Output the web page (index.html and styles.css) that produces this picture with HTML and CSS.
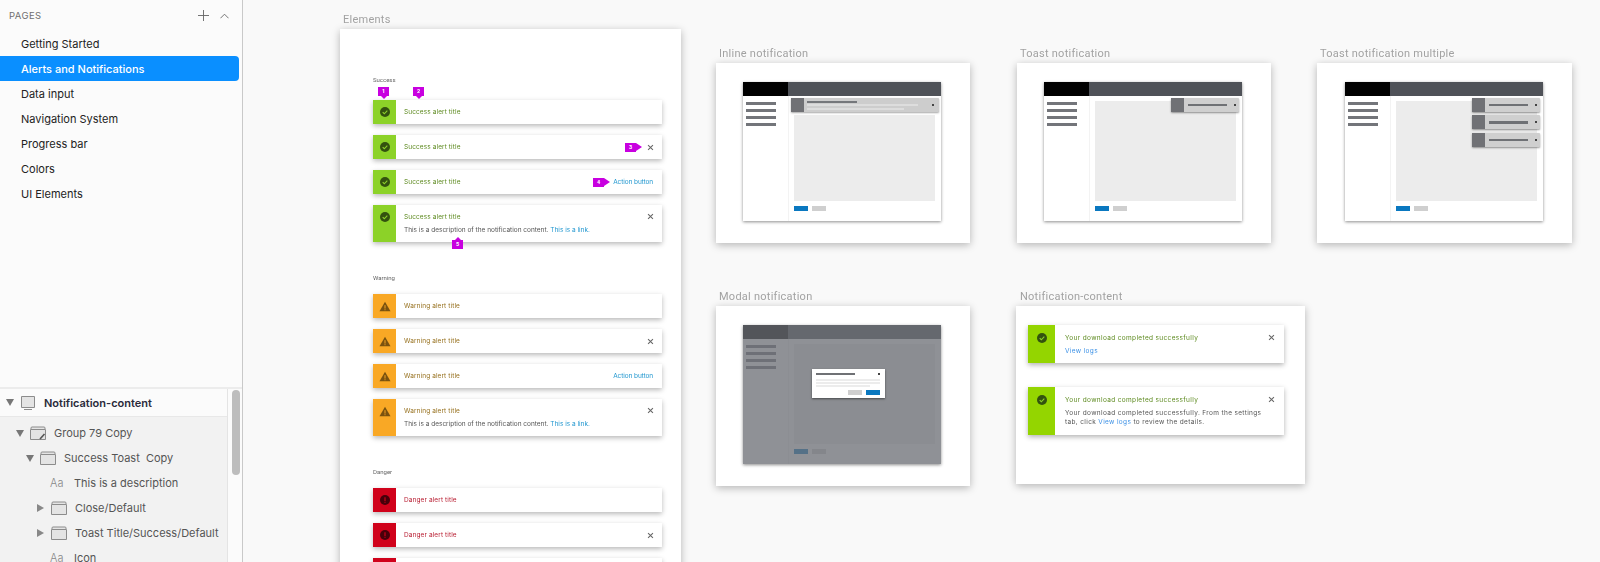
FILE: index.html
```html
<!DOCTYPE html>
<html lang="en">
<head>
    <meta charset="UTF-8">
    <title>Alerts and Notifications</title>
    <link rel="stylesheet" href="styles.css">
</head>
<body>
    <svg class="defs" width="0" height="0">
        <symbol id="i-check" viewBox="0 0 16 16">
            <circle cx="8" cy="8" r="8" fill="currentColor"/>
            <path d="M4.3 8.2l2.6 2.6 4.8-5" fill="none" stroke="#8fd42c" stroke-width="1.7"/>
        </symbol>
        <symbol id="i-warn" viewBox="0 0 16 16">
            <path d="M8 1l8 14H0z" fill="currentColor"/>
            <path d="M8 6v5M8 12v1.4" fill="none" stroke="#f9a825" stroke-width="1.4"/>
        </symbol>
        <symbol id="i-danger" viewBox="0 0 16 16">
            <circle cx="8" cy="8" r="8" fill="currentColor"/>
            <path d="M8 3.5v6M8 10.8v1.6" fill="none" stroke="#d0021b" stroke-width="1.8"/>
        </symbol>
        <symbol id="i-close" viewBox="0 0 10 10">
            <path d="M1.5 1.5l7 7M8.500 1.500l-7 7" fill="none" stroke="currentColor" stroke-width="1.5"/>
        </symbol>
        <symbol id="i-folder" viewBox="0 0 16 14">
            <path d="M1 3V2q0-1 1-1h12q1 0 1 1v1M.5 3.500h15v10H.5z" fill="#e4e4e4" stroke="#8c8c8c"/>
        </symbol>
    </svg>

    <div class="app">
        <aside class="sidebar">
            <section class="pages">
                <div class="pages-head">
                    <span>PAGES</span>
                    <svg class="head-icon plus" viewBox="0 0 12 12"><path d="M6 0v12M0 6h12"/></svg>
                    <svg class="head-icon caret" viewBox="0 0 10 6"><path d="M.5 5.500L5 1l4.500 4.500"/></svg>
                </div>
                <div class="page-item">Getting Started</div>
                <div class="page-item selected">Alerts and Notifications</div>
                <div class="page-item">Data input</div>
                <div class="page-item">Navigation System</div>
                <div class="page-item">Progress bar</div>
                <div class="page-item">Colors</div>
                <div class="page-item">UI Elements</div>
            </section>
            <section class="layers">
                <div class="layer-list">
                    <div class="layer layer-top">
                        <span class="tri down"></span>
                        <svg class="layer-icon" viewBox="0 0 16 14"><path d="M1.500.5h13v11h-13zM4 13.500h8" fill="#e4e4e4" stroke="#8c8c8c"/></svg>
                        <span>Notification-content</span>
                    </div>
                    <div class="layer depth-1">
                        <span class="tri down"></span>
                        <svg class="layer-icon" viewBox="0 0 16 14">
                            <use href="#i-folder"/>
                            <path d="M10 13l4.500-5" fill="none" stroke="#555" stroke-width="1.6"/>
                        </svg>
                        <span>Group 79 Copy</span>
                    </div>
                    <div class="layer depth-2">
                        <span class="tri down"></span>
                        <svg class="layer-icon"><use href="#i-folder"/></svg>
                        <span>Success Toast&nbsp; Copy</span>
                    </div>
                    <div class="layer depth-3">
                        <span class="tri none"></span>
                        <span class="aa">Aa</span>
                        <span>This is a description</span>
                    </div>
                    <div class="layer depth-3">
                        <span class="tri right"></span>
                        <svg class="layer-icon"><use href="#i-folder"/></svg>
                        <span>Close/Default</span>
                    </div>
                    <div class="layer depth-3">
                        <span class="tri right"></span>
                        <svg class="layer-icon"><use href="#i-folder"/></svg>
                        <span>Toast Title/Success/Default</span>
                    </div>
                    <div class="layer depth-3">
                        <span class="tri none"></span>
                        <span class="aa">Aa</span>
                        <span>Icon</span>
                    </div>
                </div>
                <div class="scroll-track"><div class="scroll-thumb"></div></div>
            </section>
        </aside>

        <main class="canvas">
            <!-- artboards sit on the free canvas -->
            <div class="artboard board-elements">
                <div class="board-label">Elements</div>
                <div class="board-body elements-body">
                    <div class="alert-group first">
                        <div class="group-label">Success</div>
                        <div class="alert success">
                            <div class="alert-side"><svg class="alert-icon"><use href="#i-check"/></svg></div>
                            <div class="alert-main"><div class="alert-title">Success alert title</div></div>
                            <span class="pin pin-down pin-1">1</span>
                            <span class="pin pin-down pin-2">2</span>
                        </div>
                        <div class="alert success">
                            <div class="alert-side"><svg class="alert-icon"><use href="#i-check"/></svg></div>
                            <div class="alert-main"><div class="alert-title">Success alert title</div></div>
                            <svg class="close"><use href="#i-close"/></svg>
                            <span class="pin pin-right pin-3">3</span>
                        </div>
                        <div class="alert success">
                            <div class="alert-side"><svg class="alert-icon"><use href="#i-check"/></svg></div>
                            <div class="alert-main"><div class="alert-title">Success alert title</div></div>
                            <a class="action">Action button</a>
                            <span class="pin pin-right pin-4">4</span>
                        </div>
                        <div class="alert success tall">
                            <div class="alert-side"><svg class="alert-icon"><use href="#i-check"/></svg></div>
                            <div class="alert-main">
                                <div class="alert-title">Success alert title</div>
                                <div class="alert-desc">This is a description of the notification content. <a>This is a link.</a></div>
                            </div>
                            <svg class="close"><use href="#i-close"/></svg>
                            <span class="pin pin-up pin-5">5</span>
                        </div>
                    </div>

                    <div class="alert-group">
                        <div class="group-label">Warning</div>
                        <div class="alert warning">
                            <div class="alert-side"><svg class="alert-icon"><use href="#i-warn"/></svg></div>
                            <div class="alert-main"><div class="alert-title">Warning alert title</div></div>
                        </div>
                        <div class="alert warning">
                            <div class="alert-side"><svg class="alert-icon"><use href="#i-warn"/></svg></div>
                            <div class="alert-main"><div class="alert-title">Warning alert title</div></div>
                            <svg class="close"><use href="#i-close"/></svg>
                        </div>
                        <div class="alert warning">
                            <div class="alert-side"><svg class="alert-icon"><use href="#i-warn"/></svg></div>
                            <div class="alert-main"><div class="alert-title">Warning alert title</div></div>
                            <a class="action">Action button</a>
                        </div>
                        <div class="alert warning tall">
                            <div class="alert-side"><svg class="alert-icon"><use href="#i-warn"/></svg></div>
                            <div class="alert-main">
                                <div class="alert-title">Warning alert title</div>
                                <div class="alert-desc">This is a description of the notification content. <a>This is a link.</a></div>
                            </div>
                            <svg class="close"><use href="#i-close"/></svg>
                        </div>
                    </div>

                    <div class="alert-group">
                        <div class="group-label">Danger</div>
                        <div class="alert danger">
                            <div class="alert-side"><svg class="alert-icon"><use href="#i-danger"/></svg></div>
                            <div class="alert-main"><div class="alert-title">Danger alert title</div></div>
                        </div>
                        <div class="alert danger">
                            <div class="alert-side"><svg class="alert-icon"><use href="#i-danger"/></svg></div>
                            <div class="alert-main"><div class="alert-title">Danger alert title</div></div>
                            <svg class="close"><use href="#i-close"/></svg>
                        </div>
                        <div class="alert danger">
                            <div class="alert-side"><svg class="alert-icon"><use href="#i-danger"/></svg></div>
                            <div class="alert-main"><div class="alert-title">Danger alert title</div></div>
                        </div>
                    </div>
                </div>
            </div>

            <div class="artboard board-inline">
                <div class="board-label">Inline notification</div>
                <div class="board-body mini-body">
                    <div class="mini">
                        <div class="mini-head"><div class="mini-logo"></div></div>
                        <div class="mini-content">
                            <div class="mini-nav"><i></i><i></i><i></i><i></i></div>
                            <div class="mini-main">
                                <div class="mini-inline">
                                    <div class="note-side"></div>
                                    <div class="inline-lines"><i></i><i></i><i></i></div>
                                    <span class="note-dot"></span>
                                </div>
                                <div class="mini-panel short"></div>
                                <div class="mini-btns"><b></b><b></b></div>
                            </div>
                        </div>
                    </div>
                </div>
            </div>

            <div class="artboard board-toast">
                <div class="board-label">Toast notification</div>
                <div class="board-body mini-body">
                    <div class="mini">
                        <div class="mini-head"><div class="mini-logo"></div></div>
                        <div class="mini-content">
                            <div class="mini-nav"><i></i><i></i><i></i><i></i></div>
                            <div class="mini-main">
                                <div class="mini-panel"></div>
                                <div class="mini-btns"><b></b><b></b></div>
                            </div>
                        </div>
                        <div class="toast-stack">
                            <div class="mini-toast"><div class="note-side"></div><i></i><span class="note-dot"></span></div>
                        </div>
                    </div>
                </div>
            </div>

            <div class="artboard board-multi">
                <div class="board-label">Toast notification multiple</div>
                <div class="board-body mini-body">
                    <div class="mini">
                        <div class="mini-head"><div class="mini-logo"></div></div>
                        <div class="mini-content">
                            <div class="mini-nav"><i></i><i></i><i></i><i></i></div>
                            <div class="mini-main">
                                <div class="mini-panel"></div>
                                <div class="mini-btns"><b></b><b></b></div>
                            </div>
                        </div>
                        <div class="toast-stack">
                            <div class="mini-toast"><div class="note-side"></div><i></i><span class="note-dot"></span></div>
                            <div class="mini-toast"><div class="note-side"></div><i></i><span class="note-dot"></span></div>
                            <div class="mini-toast"><div class="note-side"></div><i></i><span class="note-dot"></span></div>
                        </div>
                    </div>
                </div>
            </div>

            <div class="artboard board-modal">
                <div class="board-label">Modal notification</div>
                <div class="board-body mini-body">
                    <div class="mini">
                        <div class="mini-head"><div class="mini-logo"></div></div>
                        <div class="mini-content">
                            <div class="mini-nav"><i></i><i></i><i></i><i></i></div>
                            <div class="mini-main">
                                <div class="mini-panel"></div>
                                <div class="mini-btns"><b></b><b></b></div>
                            </div>
                        </div>
                        <div class="mini-overlay">
                            <div class="mini-dialog">
                                <div class="dialog-head"><i></i><span class="note-dot"></span></div>
                                <div class="dialog-lines"><i></i><i></i><i></i></div>
                                <div class="dialog-btns"><b></b><b></b></div>
                            </div>
                        </div>
                    </div>
                </div>
            </div>

            <div class="artboard board-content">
                <div class="board-label">Notification-content</div>
                <div class="board-body content-body">
                    <div class="toast">
                        <div class="toast-side"><svg class="alert-icon"><use href="#i-check"/></svg></div>
                        <div class="toast-main">
                            <div class="toast-title">Your download completed successfully</div>
                            <div class="toast-desc"><a>View logs</a></div>
                        </div>
                        <svg class="close"><use href="#i-close"/></svg>
                    </div>
                    <div class="toast">
                        <div class="toast-side"><svg class="alert-icon"><use href="#i-check"/></svg></div>
                        <div class="toast-main">
                            <div class="toast-title">Your download completed successfully</div>
                            <div class="toast-desc">Your download completed successfully. From the settings tab, click <a>View logs</a> to review the details.</div>
                        </div>
                        <svg class="close"><use href="#i-close"/></svg>
                    </div>
                </div>
            </div>
        </main>
    </div>
</body>
</html>
```

FILE: styles.css
```css
html, body {
    margin: 0;
    height: 100%;
    overflow: hidden;
}
body {
    background: #f9f9f9;
    font-family: "Inter", "Liberation Sans", sans-serif;
    color: #333;
}
.defs {
    position: absolute;
}
.app {
    display: flex;
    height: 562px;
    filter: blur(0.5px);
}

/* sidebar */
.sidebar {
    width: 242px;
    flex: none;
    display: flex;
    flex-direction: column;
    background: #fbfbfb;
    border-right: 1px solid #c9c9c9;
}
.pages {
    height: 389px;
    flex: none;
    box-sizing: border-box;
    border-bottom: 2px solid #ececec;
}
.pages-head {
    height: 31px;
    display: flex;
    align-items: center;
    padding: 0 13px 0 9px;
    font-size: 9.500px;
    letter-spacing: 0.4px;
    color: #6f6f6f;
}
.pages-head span {
    flex: 1;
}
.head-icon {
    fill: none;
    stroke: #666;
    stroke-width: 1;
}
.plus {
    width: 11px;
    height: 11px;
    margin-right: 11px;
}
.caret {
    width: 9px;
    height: 6px;
}
.page-item {
    height: 25px;
    width: 239px;
    box-sizing: border-box;
    padding-left: 21px;
    line-height: 26px;
    font-size: 11px;
    color: #222;
}
.page-item.selected {
    background: #0a8fff;
    color: #fff;
    font-weight: 500;
    border-radius: 0 4px 4px 0;
}
.layers {
    flex: 1;
    display: flex;
    min-height: 0;
}
.layer-list {
    flex: 1;
    background: #f2f2f2;
    border-right: 1px solid #e4e4e4;
    overflow: hidden;
}
.layer {
    height: 25px;
    display: flex;
    align-items: center;
    font-size: 11px;
    color: #555;
    white-space: nowrap;
}
.layer-top {
    height: 28px;
    margin-bottom: 3.500px;
    padding-left: 6px;
    background: #fbfbfb;
    border-bottom: 1px solid #e8e8e8;
    box-sizing: border-box;
    font-weight: 600;
    color: #2a2a3a;
}
.depth-1 {
    padding-left: 16px;
}
.depth-2 {
    padding-left: 26px;
}
.depth-3 {
    padding-left: 37px;
}
.tri {
    width: 8px;
    height: 8px;
    flex: none;
    margin-right: 6px;
}
.tri.down {
    box-sizing: border-box;
    border: 4px solid transparent;
    border-top: 7px solid #777;
    border-bottom: 0;
    height: 7px;
}
.tri.right {
    box-sizing: border-box;
    border: 4px solid transparent;
    border-left: 7px solid #888;
    border-right: 0;
    width: 7px;
    margin-right: 7px;
}
.layer-icon {
    width: 16px;
    height: 14px;
    flex: none;
    margin-right: 8px;
}
.aa {
    width: 16px;
    margin-right: 8px;
    margin-left: -1px;
    font-size: 11px;
    color: #888;
    font-weight: 300;
}
.scroll-track {
    width: 14px;
    flex: none;
    padding: 1px 0 0 4px;
    box-sizing: border-box;
    background: #fbfbfb;
}
.scroll-thumb {
    width: 8px;
    height: 85px;
    border-radius: 4px;
    background: #bdbdbd;
}

/* canvas */
.canvas {
    position: relative;
    flex: 1;
    overflow: hidden;
}
.artboard {
    position: absolute;
}
.board-label {
    position: absolute;
    top: -16px;
    left: 3px;
    height: 14px;
    line-height: 14px;
    font-family: "Roboto", sans-serif;
    font-size: 11px;
    letter-spacing: 0.25px;
    color: #a2a2a2;
    white-space: nowrap;
}
.board-body {
    background: #fff;
    height: 100%;
    box-sizing: border-box;
    box-shadow: 0 2px 8px rgba(0, 0, 0, 0.28);
}
.board-elements {
    left: 97px;
    top: 29px;
    width: 341px;
    height: 600px;
}
.board-inline {
    left: 473px;
    top: 63px;
    width: 254px;
    height: 180px;
}
.board-toast {
    left: 774px;
    top: 63px;
    width: 254px;
    height: 180px;
}
.board-multi {
    left: 1074px;
    top: 63px;
    width: 255px;
    height: 180px;
}
.board-modal {
    left: 473px;
    top: 306px;
    width: 254px;
    height: 180px;
}
.board-content {
    left: 773px;
    top: 306px;
    width: 289px;
    height: 178px;
}
.board-content .board-label {
    left: 4px;
}

/* alerts */
.elements-body {
    padding: 47px 19px 0 33px;
}
.alert-group {
    display: flex;
    flex-direction: column;
    gap: 11px;
    margin-bottom: 32.500px;
}
.group-label {
    height: 8px;
    line-height: 8px;
    font-family: "Roboto", sans-serif;
    font-size: 6px;
    color: #666;
    margin-bottom: 1px;
}
.alert-group.first .group-label {
    margin-bottom: 5px;
}
.alert {
    position: relative;
    display: flex;
    align-items: center;
    height: 24px;
    background: #fff;
    box-shadow: 0 2px 5px rgba(0, 0, 0, 0.28);
}
.alert.tall {
    height: 36.500px;
    align-items: flex-start;
}
.alert-side {
    width: 23px;
    height: 100%;
    flex: none;
    display: flex;
    align-items: center;
    justify-content: center;
}
.tall .alert-side {
    align-items: flex-start;
    padding-top: 6.500px;
    box-sizing: border-box;
}
.alert-icon {
    display: block;
    width: 10px;
    height: 10px;
}
.success .alert-side {
    background: #8cd228;
    color: #33520f;
}
.warning .alert-side {
    background: #f9a825;
    color: #7a520f;
}
.warning .alert-icon {
    width: 12px;
    height: 11px;
}
.danger .alert-side {
    background: #d0021b;
    color: #47000a;
}
.alert-main {
    flex: 1;
    padding-left: 8px;
}
.alert.tall .alert-main {
    padding-top: 8px;
}
.alert-title {
    font-size: 6.500px;
    line-height: 8px;
    letter-spacing: 0.1px;
}
.success .alert-title {
    color: #5d8a1f;
}
.warning .alert-title {
    color: #97711f;
}
.danger .alert-title {
    color: #b92034;
}
.alert-desc {
    margin-top: 5px;
    font-size: 6.500px;
    line-height: 8px;
    color: #555;
}
.alert-desc a {
    color: #1f96cf;
}
.close {
    width: 7px;
    height: 7px;
    flex: none;
    margin-right: 8px;
    color: #666;
}
.tall .close {
    margin-top: 8px;
}
.action {
    font-size: 6.500px;
    letter-spacing: -0.1px;
    color: #1f96cf;
    margin-right: 9px;
}

/* numbered pins drawn over the alerts */
.pin {
    position: absolute;
    width: 11px;
    height: 9px;
    background: #c800e0;
    color: #fff;
    font-family: "Roboto", sans-serif;
    font-size: 5.500px;
    font-weight: 700;
    line-height: 9px;
    text-align: center;
}
.pin::after {
    content: "";
    position: absolute;
    border: 3px solid transparent;
}
.pin-down::after {
    top: 9px;
    left: 2.500px;
    border-top-color: #c800e0;
}
.pin-up::after {
    top: -6px;
    left: 2.500px;
    border-bottom-color: #c800e0;
}
.pin-right::after {
    left: 11px;
    top: 0.500px;
    border-width: 4px 0 4px 6px;
    border-left-color: #c800e0;
}
.pin-1 {
    left: 5px;
    top: -13px;
}
.pin-2 {
    left: 40px;
    top: -13px;
}
.pin-3 {
    right: 26px;
    top: 7.500px;
}
.pin-4 {
    right: 58px;
    top: 7.500px;
}
.pin-5 {
    left: 79px;
    top: 35px;
}

/* miniature screens */
.mini-body {
    padding: 19px 0 0 27px;
}
.board-multi .mini-body {
    padding-left: 28px;
}
.mini {
    position: relative;
    width: 198px;
    height: 139px;
    display: flex;
    flex-direction: column;
    background: #fff;
    box-shadow: 0 1px 3px rgba(0, 0, 0, 0.45);
}
.mini-head {
    height: 14px;
    flex: none;
    background: #4f5258;
}
.mini-logo {
    width: 45px;
    height: 100%;
    background: #000;
}
.mini-content {
    flex: 1;
    display: flex;
}
.mini-nav {
    width: 46px;
    flex: none;
    box-sizing: border-box;
    padding: 5.500px 0 0 3px;
    border-right: 1px solid #f3f3f3;
    display: flex;
    flex-direction: column;
    gap: 4.300px;
}
.mini-nav i {
    width: 30px;
    height: 3px;
    background: #73757a;
}
.mini-main {
    flex: 1;
    padding: 5px 6px 0 5px;
    display: flex;
    flex-direction: column;
}
.mini-panel {
    height: 100px;
    background: #ececec;
}
.mini-panel.short {
    height: 86px;
    margin-top: 3px;
}
.mini-btns {
    display: flex;
    gap: 4px;
    margin-top: 5px;
}
.mini-btns b {
    width: 14px;
    height: 5px;
    background: #0a78c0;
}
.mini-btns b + b {
    background: #cfcfcf;
}
.mini-inline {
    display: flex;
    height: 14px;
    margin: -3px -4px 0 -3px;
    background: #cdcdcd;
    box-shadow: 0 1px 2px rgba(0, 0, 0, 0.35);
    align-items: center;
    border-radius: 1px;
}
.note-side {
    width: 13px;
    height: 100%;
    flex: none;
    background: #707175;
}
.note-dot {
    width: 2px;
    height: 2px;
    flex: none;
    background: #444;
}
.inline-lines {
    flex: 1;
    display: flex;
    flex-direction: column;
    gap: 1.500px;
    padding-left: 3px;
}
.inline-lines i {
    height: 2px;
    background: #ddd;
    width: 111px;
}
.inline-lines i:first-child {
    width: 50px;
    background: #75777b;
}
.inline-lines i:last-child {
    width: 97px;
}
.mini-inline .note-dot {
    margin-right: 5px;
}
.toast-stack {
    position: absolute;
    top: 16px;
    right: 3px;
    display: flex;
    flex-direction: column;
    gap: 3.400px;
}
.mini-toast {
    width: 68px;
    height: 14px;
    display: flex;
    align-items: center;
    background: #cfcfcf;
    box-shadow: 0 1px 2px rgba(0, 0, 0, 0.4);
    border-radius: 1px;
}
.mini-toast i {
    width: 39px;
    height: 2.500px;
    margin: 0 7px 0 4px;
    background: #6f7175;
}
.mini-overlay {
    position: absolute;
    inset: 0;
    padding: 44px 0 0 69px;
    background: rgba(108, 111, 118, 0.765);
    display: flex;
    align-items: flex-start;
}
.mini-dialog {
    width: 73px;
    height: 29px;
    box-sizing: border-box;
    padding: 3.500px 5px 0 4px;
    background: #fff;
    box-shadow: 0 1px 2px rgba(0, 0, 0, 0.5);
    display: flex;
    flex-direction: column;
}
.dialog-head {
    display: flex;
    align-items: center;
    justify-content: space-between;
}
.dialog-head i {
    width: 39px;
    height: 2.500px;
    background: #6f7175;
}
.dialog-lines {
    display: flex;
    flex-direction: column;
    gap: 1px;
    margin-top: 3.500px;
}
.dialog-lines i {
    height: 2px;
    background: #ececec;
}
.dialog-lines i:last-child {
    width: 54px;
}
.dialog-btns {
    display: flex;
    justify-content: flex-end;
    gap: 4px;
    margin-top: 3px;
}
.dialog-btns b {
    width: 14px;
    height: 5px;
    background: #cfcfcf;
}
.dialog-btns b + b {
    background: #0a78c0;
}

/* notification content */
.content-body {
    padding: 19px 21px 0 12px;
    display: flex;
    flex-direction: column;
    gap: 24px;
}
.toast {
    display: flex;
    background: #fff;
    box-shadow: 0 2px 5px rgba(0, 0, 0, 0.3);
}
.toast-side {
    width: 27px;
    flex: none;
    box-sizing: border-box;
    padding: 8px 0 0 9px;
    background: #94d500;
    color: #33520f;
}
.toast-main {
    flex: 1;
    padding: 9px 0 7px 10px;
}
.toast-title {
    font-size: 6.500px;
    line-height: 8px;
    letter-spacing: 0.35px;
    color: #5d8a1f;
}
.toast-desc {
    margin-top: 4.500px;
    font-size: 6.500px;
    line-height: 9.500px;
    letter-spacing: 0.35px;
    color: #555;
}
.toast-desc a {
    color: #3e92e6;
}
.toast .close {
    margin: 9px 9px 0 3px;
}
```
